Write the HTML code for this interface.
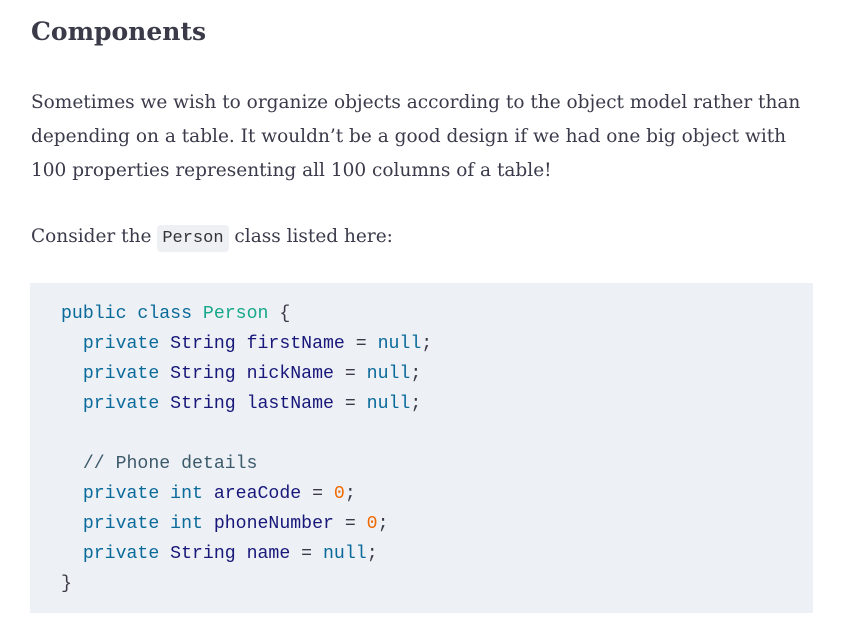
<!DOCTYPE html>
<html><head><meta charset="utf-8"><style>
body{margin:0;background:#fff;width:850px;height:627px;overflow:hidden;font-family:"DejaVu Serif","Liberation Serif",serif;color:#3a3a4a}
h2{position:absolute;left:31px;top:17px;margin:0;font-size:25px;font-weight:bold;color:#3a3a48}
p{position:absolute;left:31px;margin:0;font-size:18.5px;line-height:34px;width:778px}
code{font-family:"Liberation Mono",monospace;font-size:17px;background:#eef0f4;border-radius:4px;padding:4px 5px;color:#333}
pre{position:absolute;left:30px;top:283px;width:783px;height:330px;margin:0;background:#edf0f5;box-sizing:border-box;padding:16px 0 0 31px;font-family:"Liberation Mono",monospace;font-size:18.2px;line-height:30px;color:#3a3a48}
.k{color:#0a6a9a}.t{color:#18187a}.c{color:#16a88a}.n{color:#f06a00}.m{color:#3d5a6b}.v{color:#18187a}
</style></head><body>
<h2>Components</h2>
<p style="top:86px">Sometimes we wish to organize objects according to the object model rather than depending on a table. It wouldn’t be a good design if we had one big object with 100 properties representing all 100 columns of a table!</p>
<p style="top:220px">Consider the <code>Person</code> class listed here:</p>
<pre><span class="k">public</span> <span class="k">class</span> <span class="c">Person</span> {
  <span class="k">private</span> <span class="t">String</span> <span class="v">firstName</span> = <span class="k">null</span>;
  <span class="k">private</span> <span class="t">String</span> <span class="v">nickName</span> = <span class="k">null</span>;
  <span class="k">private</span> <span class="t">String</span> <span class="v">lastName</span> = <span class="k">null</span>;

  <span class="m">// Phone details</span>
  <span class="k">private</span> <span class="k">int</span> <span class="v">areaCode</span> = <span class="n">0</span>;
  <span class="k">private</span> <span class="k">int</span> <span class="v">phoneNumber</span> = <span class="n">0</span>;
  <span class="k">private</span> <span class="t">String</span> <span class="v">name</span> = <span class="k">null</span>;
}</pre>
</body></html>
